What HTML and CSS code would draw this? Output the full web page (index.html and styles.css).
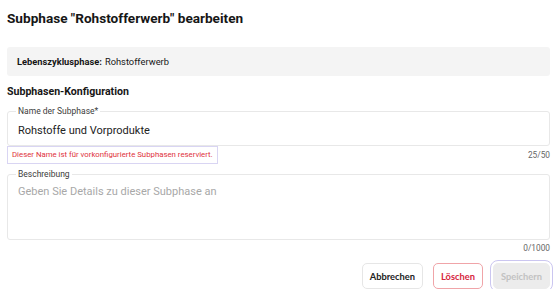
FILE: index.html
```
<!DOCTYPE html>
<html lang="de">
<head>
  <meta charset="UTF-8" />
  <title>Subphase bearbeiten</title>
  <link rel="stylesheet" href="styles.css">
</head>
<body>
  <div class="dialog">
    <h1 class="dialog-title">Subphase "Rohstofferwerb" bearbeiten</h1>

    <div class="info">
      <b>Lebenszyklusphase:</b> Rohstofferwerb
    </div>

    <h3 class="section">Subphasen-Konfiguration</h3>

    <div class="field field-name">
      <span class="field-label">Name der Subphase*</span>
      <div class="field-value">Rohstoffe und Vorprodukte</div>
    </div>
    <div class="helper">
      <span class="error">Dieser Name ist für vorkonfigurierte Subphasen reserviert.</span>
      <span class="count">25/50</span>
    </div>

    <div class="field field-desc">
      <span class="field-label">Beschreibung</span>
      <div class="field-value placeholder">Geben Sie Details zu dieser Subphase an</div>
    </div>
    <div class="helper helper-desc">
      <span class="count">0/1000</span>
    </div>

    <div class="actions">
      <button class="btn">Abbrechen</button>
      <button class="btn btn-danger">Löschen</button>
      <button class="btn btn-disabled">Speichern</button>
    </div>
  </div>
</body>
</html>
```

FILE: styles.css
```
body {
  margin: 0;
  background: #fff;
  font-family: Roboto, "Noto Sans", sans-serif;
  color: #161616;
}

.dialog {
  padding: 0 10px 0 7px;
}

.dialog-title {
  margin: 0;
  padding-top: 7px;
  font-size: 13.6px;
  line-height: 23px;
  font-weight: bold;
}

.info {
  margin-top: 17px;
  height: 29px;
  display: flex;
  align-items: center;
  padding: 0 10px;
  background: #f4f4f4;
  border-radius: 3px;
  font-size: 9.3px;
}

.info b {
  margin-right: 3px;
}

.section {
  margin: 7px 0 0;
  font-size: 10.6px;
  line-height: 18px;
  font-weight: bold;
}

.field {
  position: relative;
  margin-top: 10px;
  border: 1px solid #e8e8e8;
  border-radius: 3px;
  padding: 0 10px;
}

.field-name {
  height: 33px;
  display: flex;
  align-items: center;
}

.field-desc {
  height: 64px;
}

.field-label {
  position: absolute;
  left: 8px;
  top: -6px;
  padding: 0 2px;
  background: #fff;
  font-size: 8.5px;
  line-height: 11px;
  color: #3c3c3c;
}

.field-value {
  font-size: 11px;
  color: #222;
}

.field-name .field-value {
  margin-top: 3px;
}

.placeholder {
  margin-top: 10px;
  color: #a8a8a8;
}

.helper {
  display: flex;
  justify-content: space-between;
  align-items: center;
  height: 18px;
}

.error {
  border: 1px solid #d9d5f3;
  padding: 0 4px;
  height: 16px;
  line-height: 16px;
  font-size: 7.8px;
  color: #e0323c;
}

.count {
  font-size: 8.3px;
  color: #666;
}

.helper-desc {
  justify-content: flex-end;
  height: 16px;
}

.actions {
  display: flex;
  justify-content: flex-end;
  gap: 10px;
  margin-top: 7px;
}

.btn {
  height: 26px;
  padding: 0 7px;
  border: 1px solid #e6e6e6;
  border-radius: 5px;
  background: #fff;
  font-family: Lato, "Noto Sans", sans-serif;
  font-size: 9.3px;
  font-weight: bold;
  color: #222;
}

.btn-danger {
  border-color: #f0a4a8;
  color: #d7263d;
}

.btn-disabled {
  background: #ececec;
  border-color: #ececec;
  color: #c2c2c2;
  outline: 1px solid #cbc6f0;
  outline-offset: 2px;
}
```
